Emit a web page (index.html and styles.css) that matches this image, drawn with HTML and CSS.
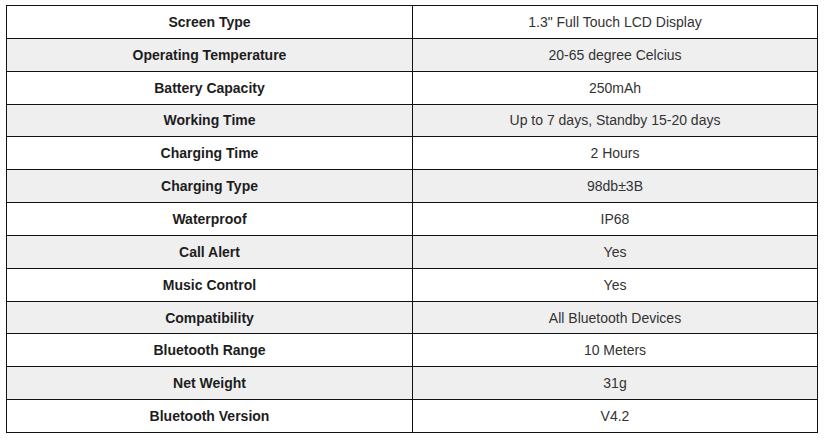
FILE: index.html
```html
<!DOCTYPE html>
<html>
<head>
<meta charset="utf-8">
<link rel="stylesheet" href="styles.css">
</head>
<body>
<div class="wrap">
<table class="specs">
<colgroup><col class="c1"><col class="c2"></colgroup>
<tbody>
<tr><th>Screen Type</th><td>1.3" Full Touch LCD Display</td></tr>
<tr><th>Operating Temperature</th><td>20-65 degree Celcius</td></tr>
<tr><th>Battery Capacity</th><td>250mAh</td></tr>
<tr><th>Working Time</th><td>Up to 7 days, Standby 15-20 days</td></tr>
<tr><th>Charging Time</th><td>2 Hours</td></tr>
<tr><th>Charging Type</th><td>98db±3B</td></tr>
<tr><th>Waterproof</th><td>IP68</td></tr>
<tr><th>Call Alert</th><td>Yes</td></tr>
<tr><th>Music Control</th><td>Yes</td></tr>
<tr><th>Compatibility</th><td>All Bluetooth Devices</td></tr>
<tr><th>Bluetooth Range</th><td>10 Meters</td></tr>
<tr><th>Net Weight</th><td>31g</td></tr>
<tr><th>Bluetooth Version</th><td>V4.2</td></tr>
</tbody>
</table>
</div>
</body>
</html>
```

FILE: styles.css
```css
html, body {
  margin: 0;
  padding: 0;
  background: #fff;
}
.wrap {
  padding: 5px 8px 0 6px;
}
.specs {
  width: 811px;
  border-collapse: collapse;
  font-family: "Liberation Sans", Arial, sans-serif;
  font-size: 14px;
  table-layout: fixed;
}
.c1 { width: 406px; }
.c2 { width: 405px; }
.specs th, .specs td {
  border: 1px solid #111;
  height: 31.85px;
  padding: 0 8px;
  text-align: center;
  vertical-align: middle;
}
.specs th {
  font-weight: bold;
  color: #1d1d1d;
}
.specs td {
  color: #333;
}
.specs tr:nth-child(even) th,
.specs tr:nth-child(even) td {
  background: #efefef;
}
```
